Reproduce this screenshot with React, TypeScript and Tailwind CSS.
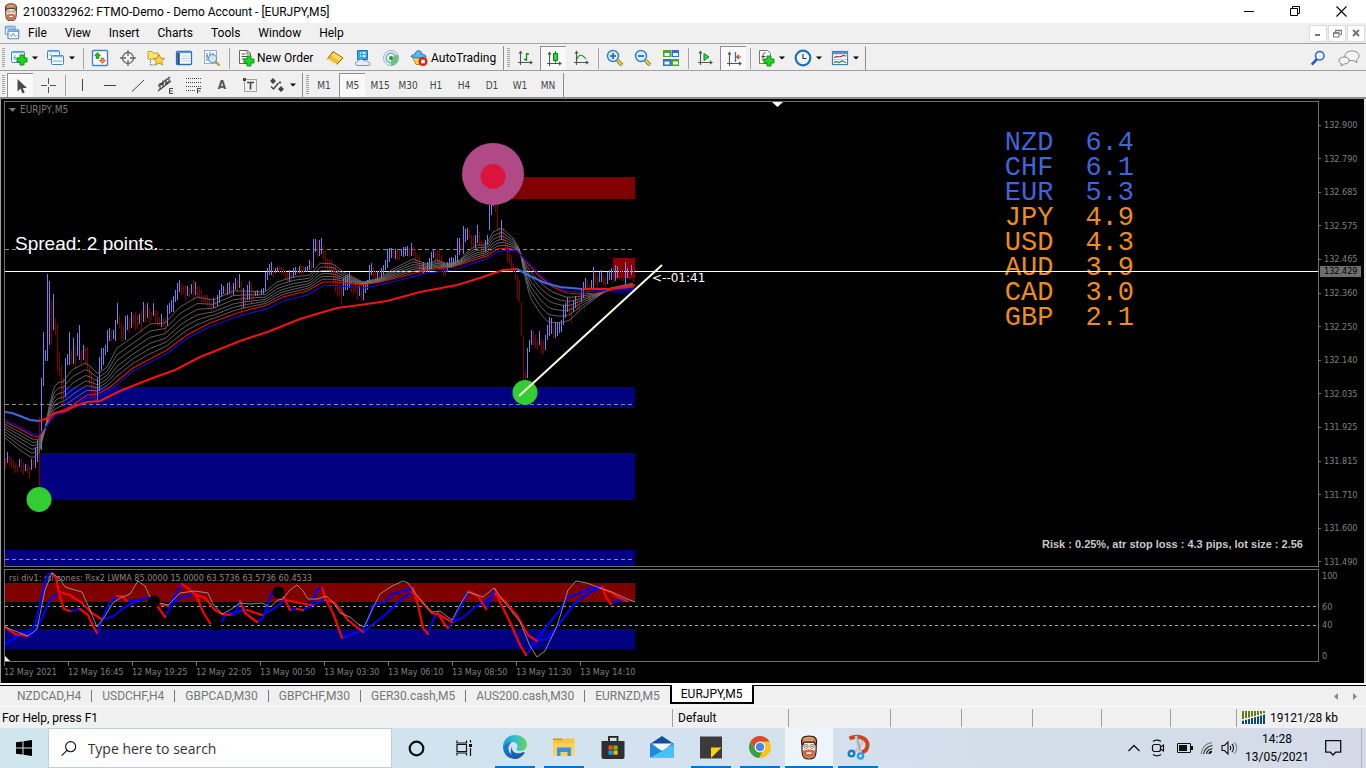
import React from "react";

type Pt = [number, number];

/* ---------- chart data ---------- */

// High / low of every bar, two pixels apart.
const BARS: Pt[] = [
  [458, 469], [452, 463], [456, 466], [457, 468], [460, 470], [463, 473], [465, 473], [459, 467], [459, 472], [463, 475],
  [464, 471], [464, 473], [467, 478], [459, 470], [460, 469], [447, 468], [440, 462], [417, 487], [378, 450], [332, 386],
  [350, 361], [274, 361], [281, 345], [300, 344], [294, 330], [318, 335], [323, 371], [351, 376], [365, 400], [378, 406],
  [358, 397], [354, 365], [332, 365], [350, 364], [338, 364], [346, 368], [333, 356], [325, 360], [350, 364], [345, 360],
  [347, 365], [347, 370], [367, 384], [372, 393], [380, 400], [385, 402], [378, 403], [357, 391], [348, 370], [348, 365],
  [345, 355], [330, 352], [328, 341], [330, 341], [330, 339], [320, 341], [303, 324], [315, 328], [323, 341], [326, 340],
  [316, 340], [315, 330], [318, 333], [312, 328], [314, 326], [312, 330], [315, 329], [314, 324], [310, 333], [302, 322],
  [305, 322], [303, 318], [308, 323], [312, 320], [303, 316], [310, 323], [311, 326], [317, 326], [314, 327], [318, 326],
  [318, 332], [305, 326], [303, 314], [300, 312], [296, 312], [290, 302], [283, 300], [280, 292], [284, 295], [286, 294],
  [285, 300], [286, 296], [288, 297], [284, 294], [280, 300], [282, 295], [286, 298], [287, 298], [290, 302], [295, 303],
  [295, 303], [295, 306], [298, 308], [302, 311], [298, 308], [300, 309], [295, 306], [290, 303], [284, 297], [286, 294],
  [287, 296], [283, 295], [282, 294], [286, 298], [283, 295], [278, 290], [280, 292], [274, 288], [281, 316], [288, 308],
  [291, 305], [285, 300], [281, 300], [283, 305], [290, 300], [291, 296], [290, 296], [291, 297], [289, 295], [288, 294],
  [272, 291], [268, 280], [264, 275], [262, 275], [267, 278], [268, 273], [267, 272], [266, 273], [267, 275], [267, 275],
  [270, 280], [272, 281], [270, 282], [272, 282], [268, 278], [267, 275], [268, 274], [266, 273], [265, 275], [266, 274],
  [267, 272], [266, 272], [260, 270], [262, 270], [239, 268], [239, 252], [240, 257], [240, 256], [238, 254], [245, 260],
  [250, 268], [258, 270], [259, 271], [260, 275], [265, 285], [264, 292], [270, 297], [275, 295], [285, 305], [278, 296],
  [276, 290], [275, 290], [272, 288], [275, 292], [278, 295], [281, 293], [285, 300], [286, 296], [290, 301], [285, 300],
  [283, 293], [280, 290], [265, 282], [263, 275], [267, 278], [270, 282], [271, 280], [270, 282], [268, 278], [265, 275],
  [260, 270], [249, 268], [248, 262], [248, 258], [251, 258], [249, 259], [250, 260], [251, 260], [249, 256], [247, 257],
  [247, 256], [246, 256], [248, 257], [243, 256], [247, 256], [250, 262], [255, 265], [255, 270], [263, 274], [262, 274],
  [266, 273], [262, 272], [258, 272], [252, 270], [249, 258], [252, 260], [250, 262], [251, 262], [255, 270], [262, 276],
  [266, 276], [262, 272], [258, 268], [257, 268], [258, 266], [255, 264], [238, 262], [238, 255], [244, 252], [226, 254],
  [229, 242], [228, 240], [230, 238], [235, 248], [236, 250], [235, 248], [225, 243], [232, 246], [240, 254], [242, 258],
  [240, 252], [235, 245], [205, 230], [190, 215], [190, 206], [200, 212], [202, 230], [228, 240], [220, 240], [228, 243],
  [235, 250], [243, 262], [250, 265], [255, 270], [263, 272], [268, 280], [275, 300], [280, 302], [302, 336], [335, 380],
  [370, 380], [348, 378], [340, 352], [330, 345], [331, 345], [335, 348], [340, 350], [331, 345], [338, 353], [340, 354],
  [335, 350], [325, 340], [317, 336], [318, 334], [325, 338], [322, 338], [322, 336], [322, 333], [320, 332], [305, 325],
  [303, 318], [297, 312], [298, 315], [304, 323], [300, 312], [296, 308], [297, 310], [299, 310], [290, 302], [282, 298],
  [278, 290], [280, 295], [285, 303], [280, 290], [267, 290], [272, 285], [275, 288], [272, 282], [270, 282], [275, 285],
  [277, 287], [272, 284], [270, 280], [268, 280], [270, 282], [265, 281], [266, 278], [265, 280], [268, 279], [267, 281],
  [262, 285], [268, 278], [266, 280], [265, 275], [264, 282],
];

const FAST: Pt[] = [
  [5, 438], [20, 450], [32, 458], [39, 453], [45, 430], [49, 407], [54, 387], [59, 382], [63, 382], [72, 370], [85, 363],
  [90, 366], [98, 374], [107, 367], [117, 348], [133, 337], [150, 324], [165, 323], [180, 307], [197, 297], [213, 300],
  [233, 291], [247, 291], [265, 292], [277, 282], [293, 277], [310, 275], [320, 263], [333, 264], [345, 273], [363, 282],
  [380, 278], [393, 269], [413, 259], [427, 264], [437, 260], [448, 264], [460, 260], [467, 252], [477, 245], [486, 245],
  [493, 232], [502, 228], [513, 238], [520, 250], [524, 273], [530, 297], [540, 313], [548, 322], [560, 323], [570, 320],
  [580, 310], [593, 300], [610, 288], [634, 283],
];
const SLOW: Pt[] = [
  [5, 422], [20, 429], [33, 436], [39, 437], [45, 428], [55, 413], [70, 407], [87, 395], [98, 394], [110, 387], [133, 368],
  [167, 350], [187, 335], [210, 323], [240, 312], [267, 305], [283, 297], [307, 291], [323, 282], [337, 282], [363, 285],
  [380, 282], [400, 277], [427, 270], [453, 267], [477, 259], [487, 256], [497, 249], [507, 248], [517, 250], [527, 263],
  [540, 277], [553, 287], [567, 293], [580, 294], [597, 293], [613, 290], [634, 287],
];
const BLUE_GAP: Pt[] = [[5, -2], [39, -2], [48, 1], [60, 3], [300, 4], [380, 3], [500, 3], [518, 1], [530, -2], [570, -2], [600, -2], [634, 2]];
const TREND_DOWN_1: Pt[] = [[5, 412], [12, 413], [20, 416], [30, 420], [39, 421]];
const TREND_UP: Pt[] = [
  [39, 421], [45, 419], [55, 413], [65, 411], [75, 406], [87, 402], [100, 401], [120, 391], [150, 379], [175, 370], [200, 357],
  [240, 341], [270, 331], [300, 319], [320, 313], [337, 308], [360, 305], [387, 301], [420, 292], [457, 285], [480, 278],
  [503, 270], [517, 269],
];
const TREND_DOWN_2: Pt[] = [[517, 269], [530, 276], [545, 283], [560, 287], [582, 289]];
const TREND_UP_2: Pt[] = [[582, 289], [610, 289], [622, 287], [635, 285]];

const RSI_GRAY: Pt[] = [
  [5, 627], [15, 631], [28, 636], [37, 629], [45, 590], [52, 573], [60, 579], [65, 587], [75, 590], [82, 592], [90, 610], [97, 627],
  [105, 616], [113, 603], [120, 598], [130, 594], [138, 581], [145, 586], [150, 597], [160, 603], [168, 605], [180, 593], [195, 591],
  [208, 593], [213, 604], [222, 614], [230, 610], [240, 603], [250, 604], [262, 603], [270, 607], [278, 600], [283, 599], [290, 590],
  [297, 585], [303, 591], [308, 599], [318, 599], [326, 596], [333, 602], [340, 613], [350, 617], [358, 624], [364, 627], [372, 610],
  [380, 594], [392, 586], [403, 581], [408, 583], [415, 593], [425, 605], [432, 612], [440, 611], [452, 620], [460, 605], [468, 592],
  [483, 597], [494, 588], [505, 603], [520, 622], [530, 646], [537, 657], [545, 651], [557, 626], [562, 610], [568, 590], [576, 581],
  [587, 583], [600, 588], [612, 592], [625, 598], [635, 602],
];
const RSI_FAST: Pt[][] = [
  [
    [5, 644], [16, 637], [22, 633], [30, 632], [36, 622], [43, 590], [47, 576], [52, 573], [56, 578], [60, 597], [64, 609], [70, 611],
    [80, 609], [88, 615], [93, 626], [97, 633], [104, 615], [110, 603], [117, 596], [122, 596], [127, 601], [138, 600], [147, 598],
  ],
  [[158, 607], [165, 617], [170, 608], [175, 595], [182, 584], [190, 590], [197, 597], [203, 612], [210, 623]],
  [
    [222, 621], [226, 614], [236, 612], [240, 601], [245, 613], [257, 622], [263, 618], [268, 604], [272, 592], [278, 590], [284, 598],
    [290, 610], [297, 609], [303, 610], [311, 606], [317, 590], [322, 588], [326, 600], [333, 613], [337, 624], [342, 638], [350, 635],
    [363, 630], [368, 620], [373, 605], [385, 602], [392, 594], [403, 591], [413, 588], [418, 605], [423, 628], [428, 634], [433, 620],
    [438, 613], [443, 622], [448, 628], [455, 617], [462, 605], [468, 591], [478, 596], [486, 609], [492, 596], [495, 589], [500, 602],
    [510, 622], [520, 645], [526, 655], [532, 646], [540, 635], [550, 622], [560, 610], [568, 597], [580, 593], [590, 588], [602, 587],
    [606, 597], [611, 604], [620, 600], [625, 598],
  ],
];
const RSI_SLOW: Pt[][] = [
  [[5, 627], [15, 634], [27, 636], [35, 632], [42, 618], [50, 600], [60, 592], [70, 595], [82, 603], [92, 613], [101, 619], [112, 617], [125, 607], [137, 601], [148, 598]],
  [
    [160, 604], [168, 606], [180, 598], [195, 594], [205, 598], [215, 610], [222, 614], [230, 615], [240, 611], [247, 610], [262, 615],
    [275, 608], [285, 600], [300, 603], [312, 605], [325, 600], [335, 603], [348, 620], [363, 632], [372, 625], [385, 615], [400, 600],
    [412, 592], [420, 600], [432, 613], [440, 615], [452, 622], [462, 618], [475, 607], [485, 602], [495, 594], [505, 601], [518, 617],
    [528, 635], [537, 641], [548, 638], [562, 620], [575, 603], [590, 592], [600, 588], [610, 592], [620, 598], [627, 601],
  ],
];

const at = (pts: Pt[], x: number): number => {
  for (let i = 1; i < pts.length; i++) {
    if (x <= pts[i][0]) {
      const [x0, y0] = pts[i - 1];
      const [x1, y1] = pts[i];
      return y0 + ((y1 - y0) * (x - x0)) / (x1 - x0);
    }
  }
  return pts[pts.length - 1][1];
};
const line = (pts: Pt[]) => pts.map(([x, y], i) => `${i ? "L" : "M"}${x} ${y.toFixed(1)}`).join("");
const XS = Array.from({ length: 315 }, (_, i) => 5 + i * 2);
const blend = (f: number) => line(XS.map((x): Pt => [x, at(FAST, x) * (1 - f) + at(SLOW, x) * f]));
const RIBBON = [0, 0.2, 0.38, 0.55, 0.7, 0.85].map(blend);
const BLUE_MA = line(XS.map((x): Pt => [x, at(SLOW, x) + at(BLUE_GAP, x)]));

const barPath = (rising: boolean) =>
  BARS.map(([h, l], i) => {
    const prev = BARS[Math.max(0, i - 1)];
    return h + l < prev[0] + prev[1] === rising ? `M${5 + i * 2} ${h}h1V${l}h-1z` : "";
  }).join("");

const slopePath = (groups: Pt[][], rising: boolean) =>
  groups
    .map((g) =>
      g
        .map(([x, y], i) => (i && y < g[i - 1][1] === rising ? `M${g[i - 1][0]} ${g[i - 1][1]}L${x} ${y}` : ""))
        .join("")
    )
    .join("");

const PRICES = ["132.900", "132.790", "132.685", "132.575", "132.465", "132.360", "132.250", "132.140", "132.035", "131.925", "131.815", "131.710", "131.600", "131.490"];
const TIMES = ["12 May 2021", "12 May 16:45", "12 May 19:25", "12 May 22:05", "13 May 00:50", "13 May 03:30", "13 May 06:10", "13 May 08:50", "13 May 11:30", "13 May 14:10"];
const STRENGTH: [string, string, boolean][] = [
  ["NZD", "6.4", true], ["CHF", "6.1", true], ["EUR", "5.3", true], ["JPY", "4.9", false],
  ["USD", "4.3", false], ["AUD", "3.9", false], ["CAD", "3.0", false], ["GBP", "2.1", false],
];

const UI = "font-['Roboto','Open_Sans',sans-serif]";
const TAHOMA = "font-['DejaVu_Sans_Condensed','DejaVu_Sans',sans-serif]";

/* ---------- toolbar pieces ---------- */

const Ico = ({ children, size = 18 }: { children: React.ReactNode; size?: number }) => (
  <svg width={size} height={size} viewBox="0 0 18 18" fill="none" className="shrink-0" aria-hidden="true">
    {children}
  </svg>
);
const Plus = ({ x = 8, y = 7 }) => (
  <path d={`M${x + 3} ${y}h4v3h3v4h-3v3h-4v-3h-3v-4h3z`} fill="#1fd51f" stroke="#0a8a0a" strokeWidth=".9" />
);
const Tool = ({ label, on, children }: { label: string; on?: boolean; children: React.ReactNode }) => (
  <button
    type="button"
    aria-label={label}
    className={
      on
        ? "mx-px flex h-6 w-[26px] items-center justify-center border-l border-t border-[#8f8f8f] bg-[#f9f9f9]"
        : "flex h-6 w-7 items-center justify-center"
    }
  >
    {children}
  </button>
);
const Drop = ({ label, children }: { label: string; children: React.ReactNode }) => (
  <button type="button" aria-label={label} className="flex h-6 w-[37px] items-center gap-1 pl-1">
    {children}
    <svg width="6" height="4" viewBox="0 0 6 4" aria-hidden="true"><path d="M0 .5h6l-3 3z" fill="#000" /></svg>
  </button>
);
const Sep = () => (
  <span className="flex w-[6px] shrink-0 justify-center"><span className="h-[21px] w-px bg-[#a5a5a5]" /></span>
);
const Grip = () => (
  <svg width="6" height="22" className="shrink-0" aria-hidden="true">
    <path d="M3.500 1V21" stroke="#a3a3a3" strokeWidth="3" strokeDasharray="1 1" />
  </svg>
);
const Edge = () => <span className="mx-px h-full w-px shrink-0 bg-[#8f8f8f]" />;

const Axes = () => <path d="M4.500 3v13M2 13.500h13M3 4.500l1.500-2 1.500 2M14 12l2 1.500-2 1.500" stroke="#555" strokeWidth="1.100" />;
const Lens = ({ minus }: { minus?: boolean }) => (
  <Ico>
    <path d="M11.500 11.500l4.500 4.500" stroke="#8a6a12" strokeWidth="3.800" />
    <path d="M11.500 11.500l4.300 4.300" stroke="#f3cb3b" strokeWidth="2.200" />
    <circle cx="7" cy="7" r="5.500" fill="#d3ecfb" stroke="#2f7fc0" strokeWidth="1.400" />
    <path d={minus ? "M4 7h6" : "M4 7h6M7 4v6"} stroke="#1a5fa8" strokeWidth="1.600" />
  </Ico>
);
const ChartWin = ({ x = 1, y = 1, w = 13, h = 11 }) => (
  <>
    <rect x={x + 0.5} y={y + 0.5} width={w} height={h} rx="1" fill="#f4faff" stroke="#3f87c4" />
    <path d={`M${x + 1} ${y + 1.5}h${w - 1}`} stroke="#7db8e8" strokeWidth="1.500" />
  </>
);
const Face = () => (
  <>
    <path d="M3.700 5v5c0 3.500.6 6 1.800 7 1.500 1.200 5.500 1.200 7 0 1.200-1 1.800-3.500 1.800-7V5z" fill="#f8e6d6" stroke="#2b1c14" strokeWidth=".9" />
    <path d="M3.500 6.500C2.800 2.500 4.500.8 9 .8s6.200 1.700 5.500 5.700l-1 .8-.7-2H5.200l-.7 2z" fill="#c98250" stroke="#2b1c14" strokeWidth=".8" />
    <path d="M5 3c2-1.200 5.500-1.200 7.500-.3M5.500 4.500c2-1 4.500-.8 6.500-.3" stroke="#efb27c" strokeWidth=".8" />
    <path d="M4.300 11.500c1.700.3 3-.8 4.700-.6 1.700-.2 3 .9 4.700.6-.1 3.500-.9 5.500-4.700 5.500s-4.600-2-4.700-5.500z" fill="#cf6a45" />
    <path d="M7.200 13.500h3.600" stroke="#fff" strokeWidth="1.100" />
    <circle cx="6.800" cy="8.500" r="1.500" fill="#fff" stroke="#6a5a50" strokeWidth=".5" />
    <circle cx="11.200" cy="8.500" r="1.500" fill="#fff" stroke="#6a5a50" strokeWidth=".5" />
    <path d="M6.500 8.500h.8M10.800 8.500h.8" stroke="#222" strokeWidth=".9" />
  </>
);

function TitleBar() {
  return (
    <header className="flex h-[23px] items-center bg-white pl-[2px] text-[12px] text-black">
      <Ico><Face /></Ico>
      <h1 className="ml-[3px] flex-1 whitespace-nowrap">2100332962: FTMO-Demo - Demo Account - [EURJPY,M5]</h1>
      <div className="flex pr-[2px]">
        <button type="button" aria-label="Minimize" className="flex w-[46px] justify-center">
          <svg width="11" height="11"><path d="M0 5.500h10" stroke="#000" /></svg>
        </button>
        <button type="button" aria-label="Restore" className="flex w-[46px] justify-center">
          <svg width="11" height="11" fill="none"><path d="M.5 2.500h7v7h-7zM2.500 2.500v-2h7v7h-2" stroke="#000" /></svg>
        </button>
        <button type="button" aria-label="Close" className="flex w-[46px] justify-center">
          <svg width="11" height="11"><path d="M.5.5l10 10M10.500.5l-10 10" stroke="#000" strokeWidth="1.100" /></svg>
        </button>
      </div>
    </header>
  );
}

function MenuBar() {
  const small = "flex h-[17px] w-[18px] items-center justify-center border border-[#dcdcdc] bg-white";
  return (
    <nav aria-label="Main menu" className="flex h-[21px] items-center border-b border-[#a0a5a0] bg-[#f0f0f0] pl-1 text-[12px] text-black">
      <Ico size={16}>
        <rect x="1.500" y="1.500" width="11" height="9" rx="1" fill="#fff" stroke="#6ea6d8" strokeWidth="1.300" />
        <rect x="4.500" y="5.500" width="12" height="10" rx="1" fill="#fff" stroke="#4c8fcc" strokeWidth="1.300" />
        <path d="M5 7h11M2 3.500h10" stroke="#6ea6d8" strokeWidth="1.500" />
        <path d="M6.500 10l2 3 2-4 2 4 2-2" stroke="#4c8fcc" />
      </Ico>
      <div className="flex flex-1 gap-[18px] pl-2">
        {["File", "View", "Insert", "Charts", "Tools", "Window", "Help"].map((m) => (
          <button type="button" key={m}>{m}</button>
        ))}
      </div>
      <div className="flex gap-px pr-px">
        <button type="button" aria-label="Minimize chart" className={small}>
          <svg width="8" height="8"><path d="M1 6h5" stroke="#6d7780" strokeWidth="2" /></svg>
        </button>
        <button type="button" aria-label="Restore chart" className={small}>
          <svg width="9" height="9" fill="none" stroke="#6d7780"><path d="M.5 4h5.500v4h-5.500zM2.500 3.500V1.500h6v4h-2" /><path d="M0 4h6.500M2 1.500h7" strokeWidth="1.600" /></svg>
        </button>
        <button type="button" aria-label="Close chart" className={small}>
          <svg width="8" height="8"><path d="M1 1l6 6M7 1l-6 6" stroke="#6d7780" strokeWidth="2" /></svg>
        </button>
      </div>
    </nav>
  );
}

function StandardToolbar() {
  return (
    <div role="toolbar" aria-label="Standard" className="flex h-[27px] items-center border-b border-[#a0a0a0] bg-[#f0f0f0] pt-[2px] text-black">
      <Grip />
      <Drop label="New chart">
        <Ico><ChartWin x={1} y={2} /><path d="M3 9h6M5 6v5" stroke="#6ea6d8" /><Plus x={7} y={6} /></Ico>
      </Drop>
      <Drop label="Profiles">
        <Ico><ChartWin x={0} y={1} w={12} h={9} /><ChartWin x={4} y={6} w={12} h={9} /><path d="M2 6h3M6 12h9" stroke="#6ea6d8" /></Ico>
      </Drop>
      <Sep />
      <Tool label="Market Watch">
        <Ico>
          <rect x="1.500" y="1.500" width="15" height="15" rx="1" fill="#fff" stroke="#3f87c4" strokeWidth="1.400" />
          <path d="M6.500 3.500l3 3h-1.500v3h-3v-3h-1.500z" fill="#1cc01c" stroke="#0a8a0a" strokeWidth=".6" />
          <path d="M11.500 14.500l-3-3h1.500v-2.500h3v2.500h1.500z" fill="#ff8b57" stroke="#d63a10" strokeWidth=".6" />
        </Ico>
      </Tool>
      <Tool label="Data Window">
        <Ico>
          <circle cx="9" cy="9" r="5.500" stroke="#666" strokeWidth="1.300" />
          <path d="M9 1v6M9 11v6M1 9h6M11 9h6" stroke="#666" strokeWidth="1.300" />
        </Ico>
      </Tool>
      <Tool label="Navigator">
        <Ico>
          <path d="M1 2.500h4l1 1.500h5v6h-10z" fill="#fbe27a" stroke="#c39a1c" strokeWidth=".9" />
          <path d="M3.500 11v5h4" stroke="#555" strokeDasharray="1 1" />
          <path d="M12 5.500l1.600 3.600 3.900.4-2.900 2.600.9 3.900-3.500-2-3.500 2 .9-3.900-2.900-2.600 3.900-.4z" fill="#ffd83b" stroke="#b98a12" strokeWidth=".9" />
        </Ico>
      </Tool>
      <Tool label="Terminal">
        <Ico>
          <rect x="1.500" y="2.500" width="15" height="13" rx="1" fill="#fff" stroke="#2a6fb5" strokeWidth="1.300" />
          <path d="M2 3.500h14" stroke="#5fa3dc" strokeWidth="1.500" />
          <path d="M3.500 4v11" stroke="#1a4f8a" strokeWidth="2.500" />
          <path d="M6 7h9M6 9.500h9M6 12h9" stroke="#b5cfe8" />
        </Ico>
      </Tool>
      <Tool label="Strategy Tester">
        <Ico>
          <rect x="1.500" y="1.500" width="12" height="13" fill="#f5f9fd" stroke="#9aaebf" />
          <path d="M4 4v8M7 3v5M10 4v6M3 7h2M9 6h2" stroke="#5f7f9f" />
          <path d="M12.500 12.500l4 4" stroke="#c79a2a" strokeWidth="2.400" />
          <circle cx="9.500" cy="9.500" r="4" fill="#cfe8f8" fillOpacity=".8" stroke="#5a9bd0" strokeWidth="1.200" />
        </Ico>
      </Tool>
      <Sep />
      <button type="button" className="flex h-6 items-center gap-[2px] px-[5px] text-[12px]">
        <Ico>
          <path d="M2.500 1.500h8l3 3v10h-11z" fill="#fff" stroke="#666" />
          <path d="M10 1.500v3.500h3.500" stroke="#666" />
          <path d="M4.500 5h4M4.500 7.500h6M4.500 10h4" stroke="#555" />
          <Plus x={7} y={7} />
        </Ico>
        <span className="w-[59px] whitespace-nowrap text-left">New Order</span>
      </button>
      <Tool label="MetaEditor">
        <Ico>
          <path d="M7 2.500L17 9l-6.500 6.500L1.500 10z" fill="#f2bd2c" stroke="#8f620a" />
          <path d="M7.500 3.500L16 9l-3 3-8-5.500z" fill="#fbd968" />
          <path d="M1.500 10l9 5.500" stroke="#fff0b0" strokeWidth="1.200" />
        </Ico>
      </Tool>
      <Tool label="Mail">
        <Ico>
          <path d="M3.500 1.500h10v9h-10z" fill="#35a7e8" stroke="#1a76b8" />
          <path d="M6 4h1M8.500 4h3M6 7h1M8.500 7h3" stroke="#fff" strokeWidth="1.400" />
          <path d="M4 16.500c-3.500 0-3.500-4 0-4.200C5 9.800 9 9.800 10 12c2-1 4 0 4 1.300 3 0 3 3.200 0 3.200z" fill="#e7edf5" stroke="#7f93ac" />
        </Ico>
      </Tool>
      <Tool label="Signals">
        <Ico>
          <circle cx="9" cy="9" r="7.500" fill="#dff2e6" stroke="#9fb6c8" />
          <circle cx="9" cy="9" r="4.800" stroke="#6aa0c8" strokeWidth="1.200" />
          <path d="M9 9v8a8 8 0 0 0 6.500-12z" fill="#55b96a" fillOpacity=".75" />
          <circle cx="9" cy="9" r="2" fill="#2f9448" />
        </Ico>
      </Tool>
      <button type="button" className="flex h-6 items-center gap-[3px] px-[5px] text-[12px]">
        <Ico>
          <path d="M2.500 8h12l-2.500 7.500h-6z" fill="#f7d24a" stroke="#b58a14" />
          <path d="M.8 7.500c1-1.500 2.500-2 4-2 .5-5 7-5 7.500 0 1.800 0 3 .5 4 2-4 2-11 2-15.500 0z" fill="#5db4ea" stroke="#2778b3" />
          <circle cx="13" cy="12.500" r="4.500" fill="#dc2413" />
          <rect x="11.200" y="10.700" width="3.600" height="3.600" fill="#fff" />
        </Ico>
        <span className="w-[66px] whitespace-nowrap text-left">AutoTrading</span>
      </button>
      <Edge />
      <Grip />
      <Tool label="Bar chart"><Ico><Axes /><path d="M10.500 4v8M8 10.500h2.500M10.500 5h2.500" stroke="#0b8a1b" strokeWidth="1.300" /></Ico></Tool>
      <Tool label="Candlesticks" on><Ico><Axes /><path d="M10.500 1v12" stroke="#0b8a1b" /><rect x="8.500" y="3.500" width="4" height="7" fill="#2bd643" stroke="#0b8a1b" /></Ico></Tool>
      <Tool label="Line chart"><Ico><Axes /><path d="M5 10c2-5 5-5 9 0" stroke="#0b9a1b" strokeWidth="1.200" /></Ico></Tool>
      <Sep />
      <Tool label="Zoom in"><Lens /></Tool>
      <Tool label="Zoom out"><Lens minus /></Tool>
      <Tool label="Tile windows">
        <Ico>
          <path d="M1 1h8v7h-8zM9 10h8v7h-8z" fill="#4ea52c" />
          <path d="M9.500 1h7.500v7h-7.500zM1 10h8v7h-8z" fill="#2f6fd0" />
          <path d="M2.500 4h5v3h-5zM11 4h5v3h-5zM2.500 12.500h5v3h-5zM11 12.500h5v3h-5z" fill="#eef5fb" />
        </Ico>
      </Tool>
      <Sep />
      <Tool label="Auto scroll"><Ico><Axes /><path d="M8 4.500v7l5-3.500z" fill="#35d84a" stroke="#0b8a1b" /></Ico></Tool>
      <Tool label="Chart shift" on><Ico><Axes /><path d="M10.500 2v10" stroke="#2a6fa5" strokeWidth="1.300" /><path d="M16 7h-4M14 4.800L11.800 7 14 9.200" stroke="#c8371a" strokeWidth="1.200" /></Ico></Tool>
      <Sep />
      <Drop label="Indicators">
        <Ico>
          <path d="M2.500 1.500h8l3 3v10h-11z" fill="#fff" stroke="#777" />
          <path d="M8.500 4c-2-.5-2.500 1-2.500 3v5M4.500 7.500h4" stroke="#444" />
          <Plus x={7} y={7} />
        </Ico>
      </Drop>
      <Drop label="Periods">
        <Ico>
          <circle cx="9" cy="9" r="7.300" fill="#eef6fc" stroke="#1f6fbe" strokeWidth="2.200" />
          <path d="M9 5v4.500h3.500" stroke="#334" strokeWidth="1.100" />
        </Ico>
      </Drop>
      <Drop label="Templates">
        <Ico>
          <rect x="1.500" y="2.500" width="15" height="13" fill="#fff" stroke="#3f7fb8" strokeWidth="1.200" />
          <path d="M1.500 4h15" stroke="#4f95d2" strokeWidth="2.500" />
          <path d="M3 8.500l3-1 3 .5 3-1.500 3 .5" stroke="#8a2b1a" strokeWidth="1.200" />
          <path d="M2 10.500h14" stroke="#b9cfe0" />
          <path d="M3 13.500l2-1 3 1 3-1.500 4 1.500" stroke="#1c8a3a" strokeWidth="1.200" />
        </Ico>
      </Drop>
      <Edge />
      <span className="flex-1" />
      <button type="button" aria-label="Search" className="mr-3">
        <Ico size={16}><path d="M8 10L2 16.500" stroke="#2855c8" strokeWidth="3" /><circle cx="11" cy="6.500" r="4.800" fill="#eaf2ff" stroke="#2f62d6" strokeWidth="1.700" /></Ico>
      </button>
      <button type="button" aria-label="Chat" className="mr-[6px]">
        <svg width="22" height="17" viewBox="0 0 22 17" fill="#f4f4f4" stroke="#8a8a8a" aria-hidden="true">
          <path d="M14 1c4 0 7 2 7 4.800 0 2-1 3.200-2.500 4l.5 3-3-2.200c-5 .4-9-1.500-9-4.800C7 3 10 1 14 1z" />
          <path d="M6 7c3 0 5 1.400 5 3.500S9 14 6 14l-3 2 .5-2.500C2 13 1 12 1 10.500 1 8.400 3 7 6 7z" />
        </svg>
      </button>
    </div>
  );
}

function DrawingToolbar() {
  return (
    <div role="toolbar" aria-label="Line studies and periods" className="flex h-[28px] items-center border-b-2 border-[#8b8f8b] bg-[#f0f0f0] pt-[2px] text-[#444]">
      <Grip />
      <Tool label="Cursor" on><Ico><path d="M5.500 2v12.500l3-3 2 5 2.200-1-2-4.500h4.300z" fill="#4a4a4a" /></Ico></Tool>
      <Tool label="Crosshair"><Ico><path d="M9.500 2v6M9.500 11v6M2 9.500h6M11 9.500h6" stroke="#555" /></Ico></Tool>
      <Sep />
      <Tool label="Vertical line"><Ico><path d="M9.500 3v12" stroke="#444" /></Ico></Tool>
      <Tool label="Horizontal line"><Ico><path d="M3 9.500h12" stroke="#444" /></Ico></Tool>
      <Tool label="Trendline"><Ico><path d="M3 15.500L15 4" stroke="#444" /></Ico></Tool>
      <Tool label="Equidistant channel">
        <Ico>
          <path d="M1 10L13 1M1 15L14 5M3 7v6M6 4.500v7M9 3v6M12 1v6M4 9l3-2M8 8l3-2" stroke="#444" strokeWidth="1.200" />
          <path d="M16 12.500h-3.500v5H16M12.500 15H15.500" stroke="#444" />
        </Ico>
      </Tool>
      <Tool label="Fibonacci retracement">
        <Ico>
          <path d="M1 2.500h15M1 6.500h15M1 10.500h15M1 14.500h9" stroke="#444" strokeDasharray="1 1" />
          <path d="M16 12.500h-3.500v5M12.500 15H15.500" stroke="#444" />
        </Ico>
      </Tool>
      <Tool label="Text"><span className={`${TAHOMA} text-[12px] font-bold leading-none text-[#555]`}>A</span></Tool>
      <Tool label="Text label">
        <Ico>
          <rect x="3.500" y="3.500" width="12" height="12" stroke="#555" strokeDasharray="1 1" />
          <path d="M6 6.500h7M9.500 6.500v7" stroke="#444" strokeWidth="1.600" />
          <path d="M2 2h3v3h-3z" fill="#444" />
        </Ico>
      </Tool>
      <Drop label="Arrows">
        <Ico>
          <path d="M5 2l3 3-3 3-3-3zM13 10l3 3-3 3-3-3z" fill="#444" />
          <path d="M3 10.500l2.500 2.500L10.500 7M12 5.500v2M11 6.500h2" stroke="#444" strokeWidth="1.500" />
        </Ico>
      </Drop>
      <Edge />
      <Grip />
      {["M1", "M5", "M15", "M30", "H1", "H4", "D1", "W1", "MN"].map((p) => (
        <Tool key={p} label={p} on={p === "M5"}><span className={`${TAHOMA} text-[10px]`}>{p}</span></Tool>
      ))}
      <Edge />
    </div>
  );
}

/* ---------- chart ---------- */

function PricePane() {
  return (
    <div className="relative min-w-0 flex-1 border border-[#707070]">
      <svg width="100%" height="100%" className="absolute inset-0" fill="none" aria-label="EURJPY five minute price chart">
        <g transform="translate(-5 -102)">
          <path d="M493 177h142v22h-142z" fill="#800000" />
          <path d="M63 387h572v21h-572zM39 453h596v47h-596zM5 550h630v16h-630zM613 288h22v5h-22z" fill="#000080" />
          <path d="M613 258h22v20h-22z" fill="#8b0000" />
          <path d="M5 249.500h630M5 404.500h630M5 559.500h630" stroke="#8f8f8f" strokeDasharray="4 3" />
          <path d="M5 271.500h3000" stroke="#fff" />
          <path d={barPath(false)} fill="#800000" />
          <path d={barPath(true)} fill="#7b7bee" />
          {RIBBON.map((d, i) => (
            <path key={i} d={d} stroke="#787878" strokeWidth=".8" />
          ))}
          <path d={line(SLOW)} stroke="#e01010" strokeWidth="1.100" />
          <path d={BLUE_MA} stroke="#1010d8" strokeWidth="1.100" />
          <path d={line(TREND_DOWN_1) + line(TREND_DOWN_2)} stroke="#4169e1" strokeWidth="2" />
          <path d={line(TREND_UP) + line(TREND_UP_2)} stroke="#f01414" strokeWidth="2" />
          <circle cx="493" cy="174" r="31" fill="#b04a86" />
          <circle cx="493" cy="176.500" r="12.500" fill="#dc143c" />
          <circle cx="525" cy="392.500" r="12.500" fill="#32cd32" />
          <circle cx="39" cy="499.500" r="12.500" fill="#32cd32" />
          <path d="M519 396L662 265" stroke="#ffffe0" strokeWidth="2" />
          <path d="M772 102h11l-5.500 5z" fill="#fff" />
        </g>
      </svg>
      <div className={`absolute left-1 top-px flex items-center gap-1 text-[10px] leading-[14px] text-[#7d7d7d] ${TAHOMA}`}>
        <svg width="7" height="4" aria-hidden="true"><path d="M0 0h7l-3.500 4z" fill="#7d7d7d" /></svg>
        EURJPY,M5
      </div>
      <p className="absolute left-[10px] top-[131px] whitespace-nowrap font-['Liberation_Sans',sans-serif] text-[19px] leading-[22px] text-white">Spread: 2 points.</p>
      <p className="absolute left-[647px] top-[168px] whitespace-nowrap font-['DejaVu_Sans',sans-serif] text-[12px] leading-4 text-white">&lt;--01:41</p>
      <table className="absolute right-[184px] top-[29px] font-['Liberation_Mono',monospace] text-[27px] leading-[25px]">
        <tbody>
          {STRENGTH.map(([name, value, strong]) => (
            <tr key={name} className={strong ? "text-[#4164d8]" : "text-[#ee8c1c]"}>
              <th scope="row" className="h-[25px] p-0 pr-8 text-left font-normal">{name}</th>
              <td className="h-[25px] p-0">{value}</td>
            </tr>
          ))}
        </tbody>
      </table>
      <svg width="100%" height="1" className="absolute left-0 top-[169px]" aria-hidden="true"><path d="M700 .5h3000" stroke="#fff" /></svg>
      <p className="absolute bottom-[14px] right-[15px] whitespace-nowrap font-['Liberation_Sans',sans-serif] text-[11px] font-bold leading-4 text-[#c8c8c8]">
        Risk : 0.25%, atr stop loss : 4.3 pips, lot size : 2.56
      </p>
    </div>
  );
}

function RsiPane() {
  return (
    <div className="relative min-w-0 flex-1 border border-[#707070]">
      <p className={`absolute left-1 top-[2px] whitespace-nowrap text-[9px] leading-3 text-[#8a8a8a] ${TAHOMA}`}>
        rsi div1: rsi zones: Rsx2 LWMA 85.0000 15.0000 63.5736 63.5736 60.4533
      </p>
      <svg width="100%" height="100%" className="absolute inset-0" fill="none" aria-label="RSI indicator">
        <g transform="translate(-5 -570)">
          <path d="M5 583h630v19h-630z" fill="#800000" />
          <path d="M5 629h630v20h-630z" fill="#000080" />
          <path d="M5 606.500h3000M5 625.500h3000" stroke="#a8a8a8" strokeDasharray="3 3" />
          <path d={slopePath(RSI_SLOW, true) + slopePath(RSI_FAST, true)} stroke="#0000ff" strokeWidth="2.200" strokeLinecap="round" />
          <path d={slopePath(RSI_SLOW, false) + slopePath(RSI_FAST, false)} stroke="#ff0000" strokeWidth="2.200" strokeLinecap="round" />
          <path d={line(RSI_GRAY)} stroke="#9a9a9a" strokeWidth=".9" />
          <circle cx="278.500" cy="592.500" r="6" fill="#000" />
          <circle cx="154" cy="601.500" r="6" fill="#000" />
          <circle cx="216" cy="626" r="5" fill="#000" />
          <path d="M5 656v5h5z" fill="#fff" />
        </g>
      </svg>
    </div>
  );
}

function Chart() {
  return (
    <main className={`flex flex-1 flex-col border-l border-r-2 border-l-[#a0a0a0] border-r-[#e8e8e8] bg-black pl-[3px] pt-[2px] text-[9px] text-[#808080] ${TAHOMA}`}>
      <div className="flex min-h-[466px] flex-1">
        <PricePane />
        <div className="relative -mb-px flex w-[45px] flex-col justify-between pt-[18px]">
          {PRICES.map((p) => (
            <span key={p} className="flex items-center gap-[3px] leading-3"><span className="h-px w-[2px] bg-[#707070]" />{p}</span>
          ))}
          <span className="absolute left-px top-[165px] flex h-[11px] w-[41px] items-center bg-[#6e6e6e] pl-1 text-black">132.429</span>
        </div>
      </div>
      <div className="mt-[2px] flex h-[93px]">
        <RsiPane />
        <div className="flex w-[45px] flex-col pl-[3px] pt-px leading-3">
          <span>100</span>
          <span className="mt-[19px]">60</span>
          <span className="mt-[6px]">40</span>
          <span className="mt-[19px]">0</span>
        </div>
      </div>
      <div className="flex h-[21px] overflow-hidden">
        {TIMES.map((t) => (
          <span key={t} className="flex w-16 shrink-0 flex-col whitespace-nowrap leading-3">
            <span className="h-1 w-px bg-[#707070]" />
            {t}
          </span>
        ))}
      </div>
    </main>
  );
}

function ChartTabs() {
  return (
    <nav aria-label="Charts" className="flex h-[23px] border-t-2 border-white bg-[#f0f0f0] text-[12px] text-[#777]">
      <span className="w-[7px] border-t border-black" />
      {["NZDCAD,H4", "USDCHF,H4", "GBPCAD,M30", "GBPCHF,M30", "GER30.cash,M5", "AUS200.cash,M30", "EURNZD,M5"].map((t, i) => (
        <button type="button" key={t} className="flex h-[20px] items-center whitespace-nowrap border-t border-black">
          <span className="px-[10px] leading-[18px]">{t}</span>
          {i < 6 && <span className="h-3 w-px bg-[#777]" />}
        </button>
      ))}
      <button type="button" aria-current="page" className="h-[19px] whitespace-nowrap border-2 border-t-0 border-black bg-white px-[9px] leading-[18px] text-black">
        EURJPY,M5
      </button>
      <span className="flex flex-1 items-center justify-end gap-[14px] border-t border-black pr-2">
        <svg width="5" height="7"><path d="M4 0v7l-4-3.500z" fill="#8a8a8a" /></svg>
        <svg width="5" height="7"><path d="M0 0v7l4-3.500z" fill="#8a8a8a" /></svg>
      </span>
    </nav>
  );
}

function StatusBar() {
  const cell = "h-[18px] shrink-0 border-l border-[#a0a0a0] pl-[5px]";
  return (
    <footer className="flex h-[22px] items-center overflow-hidden border-t border-white bg-[#f0f0f0] text-[12px] leading-[18px] text-black">
      <span className="flex-1 whitespace-nowrap pl-[2px]">For Help, press F1</span>
      <span className={`${cell} w-[116px]`}>Default</span>
      <span className={`${cell} w-[102px]`} />
      <span className={`${cell} w-[71px]`} />
      <span className={`${cell} w-[71px]`} />
      <span className={`${cell} w-[69px]`} />
      <span className={`${cell} w-[69px]`} />
      <span className={`${cell} w-[66px]`} />
      <span className={`${cell} flex w-[130px] items-center gap-1 whitespace-nowrap`}>
        <svg width="24" height="13" aria-hidden="true">
          <path d="M0 6.500H24" stroke="#0b4a6a" strokeWidth="13" strokeDasharray="2 1" />
          <path d="M0 0H24V3L0 10z" fill="#f0f0f0" />
          <path d="M1 0V8M4 0V7M7 0V6.500M10 0V5.500M13 0V5M16 0V4M19 0V3M22 0V2" stroke="#6b7a12" strokeWidth="2" />
        </svg>
        19121/28 kb
      </span>
    </footer>
  );
}

/* ---------- Windows taskbar ---------- */

const TaskIcon = ({ label, state = "idle", children }: { label: string; state?: "idle" | "open" | "active"; children: React.ReactNode }) => (
  <button
    type="button"
    aria-label={label}
    className={
      state === "active"
        ? "mr-px flex h-10 w-12 flex-col items-center bg-[#edf4fa]"
        : "mr-px flex h-10 w-12 flex-col items-center"
    }
  >
    <span className="flex flex-1 items-center">
      <svg width="26" height="26" viewBox="0 0 26 26" fill="none" aria-hidden="true">{children}</svg>
    </span>
    <span className={state === "idle" ? "h-[2px]" : state === "open" ? "h-[2px] w-10 bg-[#0a72cc]" : "h-[2px] w-full bg-[#0a72cc]"} />
  </button>
);

function Taskbar() {
  return (
    <div className="flex h-10 items-stretch bg-linear-to-r from-[#cfe6ef] via-[#d3e2ee] to-[#d4dae8] text-black">
      <button type="button" aria-label="Start" className="flex w-12 items-center justify-center">
        <svg width="16" height="16"><path d="M0 2.300l6.500-.9v6.100H0zM7.500 1.200L16 0v7.500H7.500zM0 8.500h6.500v6.100L0 13.700zM7.500 8.500H16V16l-8.500-1.200z" fill="#000" /></svg>
      </button>
      <label className="flex w-[344px] items-center border border-[#bccdd6] bg-white pl-3">
        <svg width="17" height="17" viewBox="0 0 17 17" fill="none" stroke="#111" strokeWidth="1.200" aria-hidden="true">
          <circle cx="10.500" cy="6.500" r="5.500" /><path d="M6.500 10.500L.7 16.300" />
        </svg>
        <input type="text" aria-label="Search" placeholder="Type here to search" className="ml-[11px] w-full bg-transparent font-['Open_Sans',sans-serif] text-[14px] outline-none placeholder:text-[#333]" />
      </label>
      <button type="button" aria-label="Cortana" className="flex w-12 items-center justify-center">
        <svg width="17" height="17" fill="none"><circle cx="8.500" cy="8.500" r="6.800" stroke="#111" strokeWidth="2.200" /></svg>
      </button>
      <button type="button" aria-label="Task View" className="mr-[3px] flex w-12 items-center justify-center">
        <svg width="17" height="16" fill="none" stroke="#111" strokeWidth="1.200">
          <path d="M1 4.500h9.500v7H1zM1 .5V3h9.500V.5M1 15.500V13h9.500v2.500M14.500 0v2.500M14.500 8v8" />
          <path d="M13 4h3v3h-3z" fill="#111" stroke="none" />
        </svg>
      </button>
      <TaskIcon label="Edge" state="open">
        <defs>
          <linearGradient id="edgeTop" x1="0" y1="0" x2="1" y2="0"><stop offset="0" stopColor="#1c9de0" /><stop offset=".55" stopColor="#35c1c9" /><stop offset="1" stopColor="#6ad64a" /></linearGradient>
          <linearGradient id="edgeLow" x1="0" y1="0" x2="1" y2="1"><stop offset="0" stopColor="#1b87d8" /><stop offset="1" stopColor="#0f4e9e" /></linearGradient>
        </defs>
        <path d="M1 13C1 6 6.500 1 13 1c7 0 12 4.500 12 9.800 0 3.700-3 6.200-6.500 6.200-2.500 0-4-.8-4-1.800 0-.8 1-1.200 1-3 0-2.200-2-4.200-5-4.200-5 0-8.500 2.500-9.500 5z" fill="url(#edgeTop)" />
        <path d="M1 13c.8-3 4.500-5.500 9-5-2.500 1.500-3.500 4-3.500 6.500 0 5 4.500 9 11 6.500l4.500-1.500C20 23 16.500 25 13 25 6 25 1 19.500 1 13z" fill="url(#edgeLow)" />
        <path d="M10 12.500c-1 5 4 9 11.500 5.500.8-.3 1.500.3.8 1.300-1.500 2.300-4.500 4.200-7.800 4.200-4.500 0-7.500-4.500-4.500-11z" fill="#1560b0" />
      </TaskIcon>
      <TaskIcon label="File Explorer" state="open">
        <path d="M2 4.500h9l1.500 2H2z" fill="#d9920b" />
        <path d="M2 6h21.500v15.500H2z" fill="#fbd05b" />
        <path d="M2 6h10l1.500-1.500h10V9H2z" fill="#f8c341" />
        <path d="M6 13.500h14V22h-3.500v-4h-7v4H6z" fill="#3a93dc" />
      </TaskIcon>
      <TaskIcon label="Microsoft Store">
        <path d="M9 8V2.800h8.500V8" stroke="#222" strokeWidth="1.800" />
        <path d="M1.500 7h23v16a2 2 0 0 1-2 2h-19a2 2 0 0 1-2-2z" fill="#2f2f33" />
        <path d="M8.500 11.500h4.200v4.200H8.500z" fill="#f25022" /><path d="M13.500 11.500h4.200v4.200h-4.200z" fill="#7fba00" />
        <path d="M8.500 16.500h4.200v4.200H8.500z" fill="#00a4ef" /><path d="M13.500 16.500h4.200v4.200h-4.200z" fill="#ffb900" />
      </TaskIcon>
      <TaskIcon label="Mail">
        <path d="M1 10L13 2l12 8-12 6z" fill="#0f4f9e" />
        <path d="M2.500 9.500h21L13 17z" fill="#f4f8fc" />
        <path d="M1 10l12 7 12-7v13.500H1z" fill="#2b9fea" />
        <path d="M25 10v13.500H1z" fill="#46c0f5" />
        <path d="M1 10l12 7-12 6.500z" fill="#1e88dc" />
      </TaskIcon>
      <TaskIcon label="Sticky Notes" state="open">
        <path d="M2 2.500h22v22H2z" fill="#3b3b3b" />
        <path d="M13 13.500H23.500L13 24z" fill="#ffd500" />
      </TaskIcon>
      <TaskIcon label="Chrome" state="open">
        <circle cx="13" cy="13" r="11" fill="#fbc31c" />
        <path d="M3.500 7.500A11 11 0 0 1 22.500 7.500H13a5.500 5.500 0 0 0-4.800 8.200z" fill="#d9493a" />
        <path d="M3.500 7.500L8.200 15.700A5.500 5.500 0 0 0 15 18l-3 6A11 11 0 0 1 3.500 7.500z" fill="#34a048" />
        <circle cx="13" cy="13" r="5.200" fill="#fff" /><circle cx="13" cy="13" r="4.200" fill="#4285f4" />
      </TaskIcon>
      <TaskIcon label="MetaTrader" state="active"><g transform="translate(1 1) scale(1.340)"><Face /></g></TaskIcon>
      <TaskIcon label="Snipping Tool" state="open">
        <path d="M4.500 4.500C13 .5 22.500 4 22.500 11c0 4.500-2 6.500-6 7.500" stroke="#d2421d" strokeWidth="4" />
        <path d="M11 2l3 12 2 6M18 7l-4 7-5 4" stroke="#c3c9ce" strokeWidth="3" />
        <path d="M12.500 3l2.500 13" stroke="#8e979f" />
        <circle cx="6.500" cy="19.500" r="2.800" stroke="#1d7ac4" strokeWidth="2.400" /><circle cx="15.500" cy="22" r="2.600" stroke="#2ea0e8" strokeWidth="2.400" />
      </TaskIcon>
      <div className="flex flex-1 items-center justify-end gap-[7px] pr-[4px]">
        <svg width="14" height="8" fill="none" className="mr-[2px]"><path d="M1.500 7L7 1.500 12.500 7" stroke="#111" strokeWidth="1.300" /></svg>
        <svg width="16" height="18" viewBox="0 0 16 18" fill="none" stroke="#111" strokeWidth="1.200" className="mr-1">
          <rect x="2.500" y="5.500" width="8" height="7" rx="2" /><path d="M10.500 8l3-2v6l-3-2M3 2.500c2.500-1.700 5.500-1.700 8 0M3 15.500c2.500 1.700 5.500 1.700 8 0" />
        </svg>
        <svg width="16" height="10" fill="none"><path d="M.5.5h13v9H.5z" stroke="#111" /><path d="M2 2h8v6H2zM14 3h2v4h-2z" fill="#111" /></svg>
        <svg width="14" height="14" fill="none" stroke="#111" strokeWidth="1.100">
          <path d="M1 13C2 7 6 2.500 12 1.500" stroke="#777" /><path d="M3.500 13C4.500 8.500 8 5 12.500 4.500" /><path d="M6.500 13c.5-3 3-5 6-5.200" /><path d="M9.500 13c0-1.200 1-2.200 2.500-2.200" strokeWidth="2" />
        </svg>
        <svg width="17" height="14" fill="none" stroke="#111" strokeWidth="1.100"><path d="M1 4.500h2.500L7 1v12L3.500 9.500H1zM9 5c1 1 1 3 0 4M11 3c2 2 2 6 0 8" /><path d="M13.500 1.500c3 3 3 8 0 11" stroke="#888" /></svg>
        <time dateTime="2021-05-13T14:28" className="flex w-16 flex-col items-center text-[12px] leading-[18px]">
          <span>14:28</span>
          <span>13/05/2021</span>
        </time>
        <button type="button" aria-label="Notifications" className="ml-[7px] flex w-5 justify-center">
          <svg width="17" height="16" fill="none"><path d="M.7.700h15v11.500h-5L8 15l-2.600-2.800H.7z" stroke="#111" strokeWidth="1.300" /></svg>
        </button>
        <span className="ml-[11px] h-10 w-px bg-[#a9b3c2]" />
      </div>
    </div>
  );
}

export default function App() {
  return (
    <div className={`flex min-h-screen flex-col overflow-x-hidden bg-[#f0f0f0] ${UI}`}>
      <TitleBar />
      <MenuBar />
      <StandardToolbar />
      <DrawingToolbar />
      <Chart />
      <ChartTabs />
      <StatusBar />
      <Taskbar />
    </div>
  );
}
